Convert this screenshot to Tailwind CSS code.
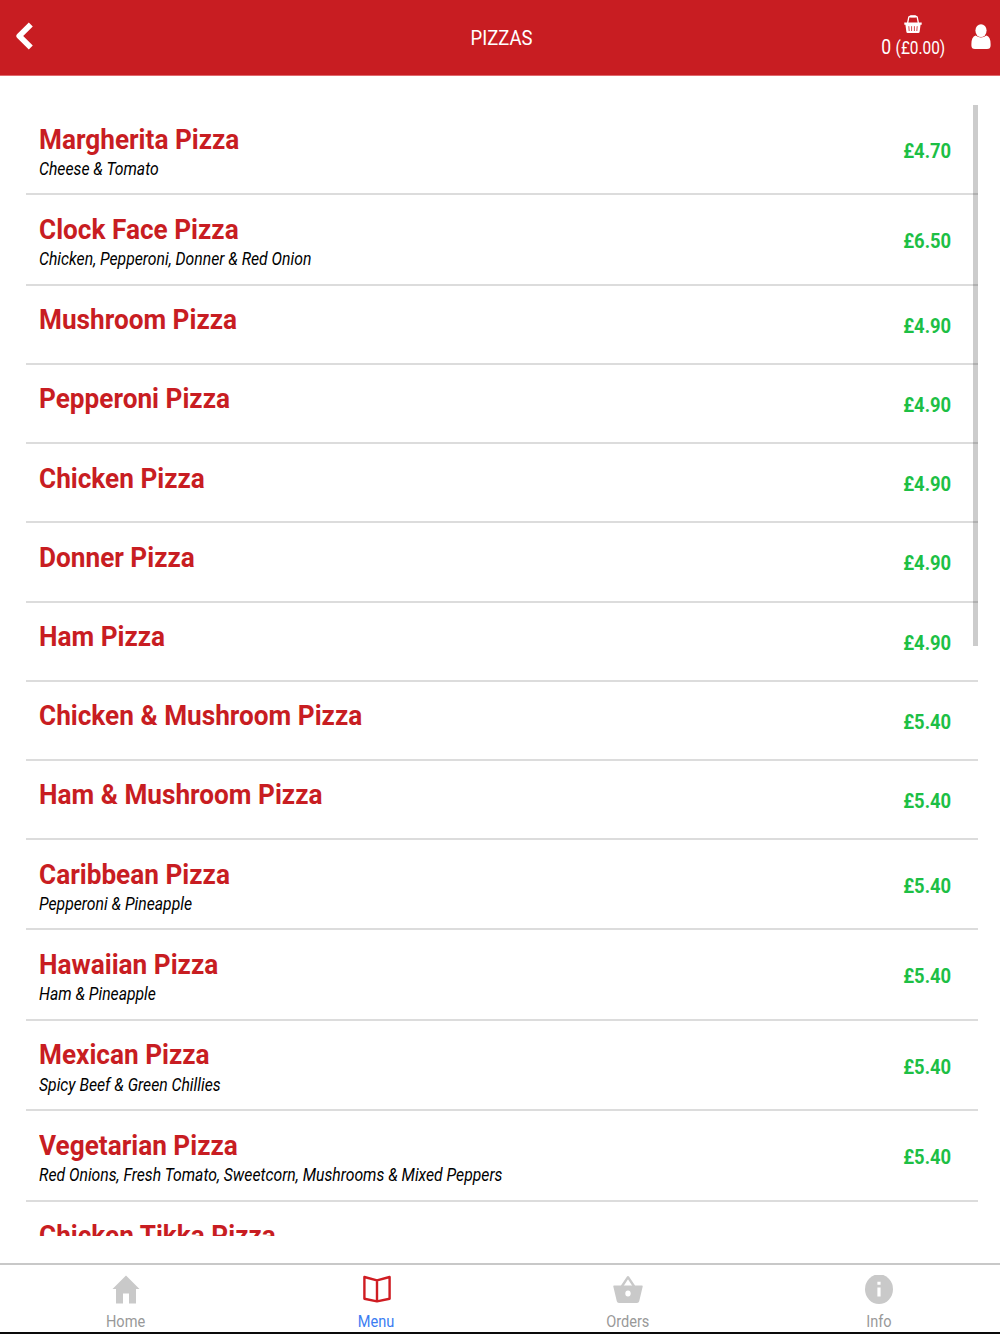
<!DOCTYPE html>
<html lang="en">
<head>
    <meta charset="UTF-8">
    <meta name="viewport" content="width=device-width, initial-scale=1.0">
    <title>Pizzas</title>
    <script src="https://cdn.jsdelivr.net/npm/@tailwindcss/browser@4"></script>
</head>
<body class="bg-white font-['Roboto',sans-serif]">
<div class="w-[1000px] h-[1334px] flex flex-col overflow-hidden">

    <!-- Header -->
    <header class="h-[76px] shrink-0 bg-[#c81d22] border-b border-[#e0686c] text-white grid grid-cols-[1fr_auto_1fr] items-center">
        <svg class="w-[18px] h-[28px] ml-[15px] -mt-[4px]" viewBox="0 0 18 28" fill="none" stroke="#fff" stroke-width="5.6" stroke-linejoin="round">
            <path d="M15.8 2.4 L4.2 14 L15.8 25.6" />
        </svg>
        <h1 class="text-[20px] leading-6 ml-[3px] mt-[1px] scale-x-[0.925]">PIZZAS</h1>
        <div class="flex justify-end items-start pr-[9px]">
            <div class="w-[64px] mr-[26px] flex flex-col items-center">
                <svg class="w-[18px] h-[18px]" viewBox="0 0 18 18">
                    <path d="M3.6 8 L4.8 2.2 Q5 1.5 6 1.5 H12 Q13 1.5 13.2 2.2 L14.4 8" fill="none" stroke="#fff" stroke-width="1.3" />
                    <path d="M6.2 0.2 H11.8 V2.6 H6.2 Z M0.3 7.4 H17.7 V9.8 H0.3 Z M1.4 9.6 H16.6 L15.6 17 Q15.4 18 14.4 18 H3.6 Q2.6 18 2.4 17 Z" fill="#fff" />
                    <path d="M4.8 11.2 L5.2 16 M7.6 11.2 V16 M10.4 11.2 V16 M13.2 11.2 L12.8 16" stroke="#c81d22" stroke-width="0.8" />
                </svg>
                <p class="text-[20px] leading-6 whitespace-nowrap mt-[2px] scale-x-[0.88]">0 <span class="text-[17.5px]">(£0.00)</span></p>
            </div>
            <svg class="w-[20px] h-[26px] mt-[9px]" viewBox="0 0 20 26" fill="#fff">
                <ellipse cx="10" cy="6.6" rx="5.6" ry="6.4" />
                <path d="M4.6 11.4 Q10 15.4 15.4 11.4 Q19.6 12.6 19.6 20 V21.5 Q19.6 25 16 25 H4 Q0.4 25 0.4 21.5 V20 Q0.4 12.6 4.6 11.4 Z" />
            </svg>
        </div>
    </header>

    <!-- Product list -->
    <main class="relative h-[1131px] shrink-0 mt-[29px] ml-[26px] mr-[22px] overflow-hidden">
        <div id="productList"></div>
        <!-- Scroll indicator -->
        <div class="absolute top-0 right-0 w-[5px] h-[541px] bg-black/20"></div>
    </main>

    <!-- Tab bar -->
    <nav class="w-[1004px] mt-[27px] h-[69px] shrink-0 border-t-2 border-[#c8c8c8] grid grid-cols-4 text-[16px] leading-5 text-[#999]">
        <div class="flex flex-col items-center pt-[10px]">
            <svg class="w-[28px] h-[30px]" viewBox="0 0 28 30" fill="#c9c9c9">
                <path d="M14 0.5 L27.5 14 H24 V28.5 H17 V18.5 H11 V28.5 H4 V14 H0.5 Z" />
            </svg>
            <span class="mt-[7px] scale-x-[0.91]">Home</span>
        </div>
        <div class="flex flex-col items-center pt-[10px]">
            <svg class="w-[28px] h-[30px]" viewBox="0 0 28 30" fill="none" stroke="#cf1c22" stroke-width="2.4" stroke-linejoin="round">
                <path d="M1.4 2 L14 5.4 L26.6 2 V23.8 L14 26.4 L1.4 23.8 Z M14 5.4 V26.4" />
            </svg>
            <span class="mt-[7px] text-[#3b7df2] scale-x-[0.91]">Menu</span>
        </div>
        <div class="flex flex-col items-center pt-[10px]">
            <svg class="w-[30px] h-[30px]" viewBox="0 0 30 30">
                <path d="M8.8 11.5 L15 2.2 L21.2 11.5" fill="none" stroke="#c9c9c9" stroke-width="2.4" stroke-linejoin="round" />
                <path d="M1.2 10.4 H28.8 Q30 10.4 29.7 11.6 L26.2 26.2 Q25.8 28 24 28 H6 Q4.2 28 3.8 26.2 L0.3 11.6 Q0 10.4 1.2 10.4 Z" fill="#c9c9c9" />
                <ellipse cx="15" cy="18.6" rx="2.7" ry="3" fill="#fff" />
            </svg>
            <span class="mt-[7px] scale-x-[0.91]">Orders</span>
        </div>
        <div class="flex flex-col items-center pt-[10px]">
            <svg class="w-[28px] h-[30px]" viewBox="0 0 28 30">
                <ellipse cx="14" cy="14" rx="14" ry="14" fill="#c9c9c9" transform="translate(0 -0.7) scale(1 1.06)" />
                <path d="M12.4 6.8 H15.6 V9.8 H12.4 Z M12.4 12.4 H15.6 V21.4 H12.4 Z" fill="#fff" />
            </svg>
            <span class="mt-[7px] scale-x-[0.91]">Info</span>
        </div>
    </nav>
    <div class="h-[2px] shrink-0 bg-[#0a0a0a]"></div>
</div>

<script>
    const products = [
        { name: 'Margherita Pizza', info: 'Cheese & Tomato', price: '4.70' },
        { name: 'Clock Face Pizza', info: 'Chicken, Pepperoni, Donner & Red Onion', price: '6.50' },
        { name: 'Mushroom Pizza', price: '4.90' },
        { name: 'Pepperoni Pizza', price: '4.90' },
        { name: 'Chicken Pizza', price: '4.90' },
        { name: 'Donner Pizza', price: '4.90' },
        { name: 'Ham Pizza', price: '4.90' },
        { name: 'Chicken & Mushroom Pizza', price: '5.40' },
        { name: 'Ham & Mushroom Pizza', price: '5.40' },
        { name: 'Caribbean Pizza', info: 'Pepperoni & Pineapple', price: '5.40' },
        { name: 'Hawaiian Pizza', info: 'Ham & Pineapple', price: '5.40' },
        { name: 'Mexican Pizza', info: 'Spicy Beef & Green Chillies', price: '5.40' },
        { name: 'Vegetarian Pizza', info: 'Red Onions, Fresh Tomato, Sweetcorn, Mushrooms & Mixed Peppers', price: '5.40' },
        { name: 'Chicken Tikka Pizza' }
    ];

    document.getElementById('productList').innerHTML = products.map(p => `
        <div class="${p.info ? 'h-[90.4px]' : 'h-[79.2px]'} flex justify-between border-b-2 border-[#dcdcdc] pl-[13px] pr-[26.5px]">
            <div class="pt-[17.5px]">
                <h2 class="text-[28px] leading-[34px] font-bold text-[#c81d22] whitespace-nowrap origin-left scale-x-[0.935]">${p.name.replace('&', '&amp;')}</h2>
                ${p.info ? `<p class="text-[17.5px] leading-[24px] mt-[0.5px] italic text-black whitespace-nowrap origin-left scale-x-[0.899]">${p.info.replace('&', '&amp;')}</p>` : ''}
            </div>
            ${p.price ? `<span class="self-center mt-[3px] text-[20px] leading-6 font-bold text-[#1dbf45] origin-right scale-x-[0.92]">£${p.price}</span>` : ''}
        </div>`).join('');
</script>
</body>
</html>
